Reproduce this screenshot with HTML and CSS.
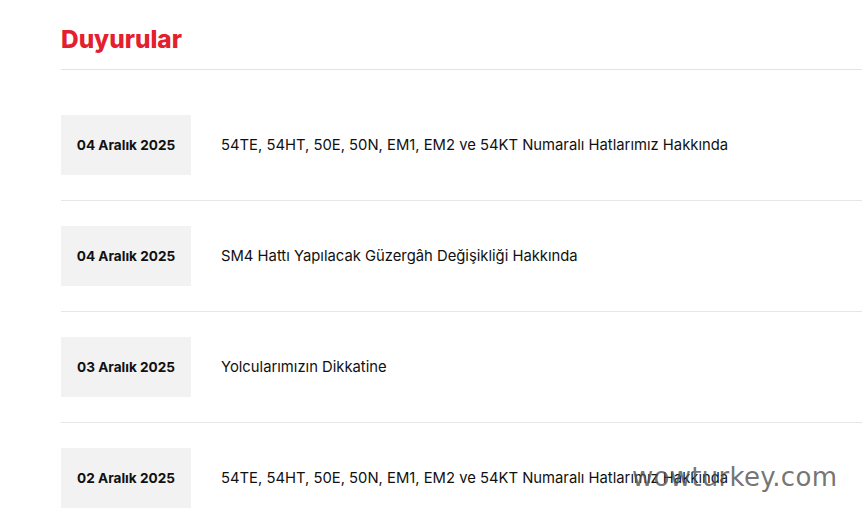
FILE: index.html
```html
<!DOCTYPE html>
<html lang="tr">
<head>
<meta charset="utf-8">
<title>Duyurular</title>
<link rel="stylesheet" href="styles.css">
</head>
<body>
<main class="page">
  <h1 class="title">Duyurular</h1>
  <ul class="list">
    <li class="item">
      <div class="date">04 Aralık 2025</div>
      <a class="subject" href="#">54TE, 54HT, 50E, 50N, EM1, EM2 ve 54KT Numaralı Hatlarımız Hakkında</a>
    </li>
    <li class="item">
      <div class="date">04 Aralık 2025</div>
      <a class="subject" href="#">SM4 Hattı Yapılacak Güzergâh Değişikliği Hakkında</a>
    </li>
    <li class="item">
      <div class="date">03 Aralık 2025</div>
      <a class="subject" href="#">Yolcularımızın Dikkatine</a>
    </li>
    <li class="item">
      <div class="date">02 Aralık 2025</div>
      <a class="subject" href="#">54TE, 54HT, 50E, 50N, EM1, EM2 ve 54KT Numaralı Hatlarımız Hakkında</a>
    </li>
  </ul>
</main>
<div class="watermark">wowturkey.com</div>
</body>
</html>
```
FILE: styles.css
```css
html, body {
  margin: 0;
  padding: 0;
  background: #ffffff;
  overflow: hidden;
}
body {
  font-family: "Inter", "Noto Sans", sans-serif;
  color: #111111;
}
.page {
  padding: 23px 0 0 61px;
}
.title {
  margin: 0;
  font-size: 24.4px;
  font-weight: 800;
  color: #e4202e;
  line-height: 32px;
  padding-bottom: 14px;
  border-bottom: 1px solid #e3e3e3;
}
.list {
  list-style: none;
  margin: 0;
  padding: 20px 0 0 0;
}
.item {
  display: flex;
  align-items: center;
  gap: 30px;
  padding: 25px 0;
  border-bottom: 1px solid #e6e6e6;
}
.date {
  flex: 0 0 130px;
  height: 60px;
  display: flex;
  align-items: center;
  justify-content: center;
  background: #f2f2f2;
  font-size: 13.6px;
  font-weight: 700;
  color: #111111;
}
.subject {
  font-size: 14.8px;
  color: #111111;
  text-decoration: none;
}
.watermark {
  position: absolute;
  left: 632px;
  top: 462px;
  font-family: "DejaVu Sans", sans-serif;
  font-size: 26px;
  color: rgba(80, 80, 80, 0.8);
  letter-spacing: 0.3px;
}
```
